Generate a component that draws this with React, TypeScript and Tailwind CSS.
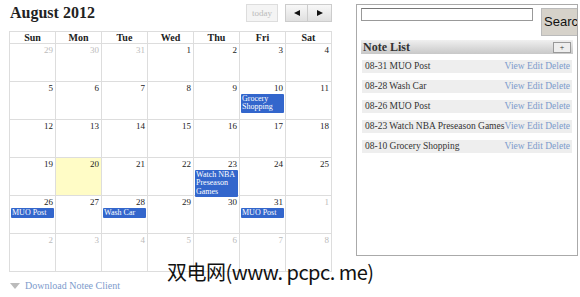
import React from 'react';

type Ev = { title: string };
type Day = { n: number; other?: boolean; today?: boolean; events?: Ev[] };

const weeks: Day[][] = [
  [{ n: 29, other: true }, { n: 30, other: true }, { n: 31, other: true }, { n: 1 }, { n: 2 }, { n: 3 }, { n: 4 }],
  [{ n: 5 }, { n: 6 }, { n: 7 }, { n: 8 }, { n: 9 }, { n: 10, events: [{ title: 'Grocery Shopping' }] }, { n: 11 }],
  [{ n: 12 }, { n: 13 }, { n: 14 }, { n: 15 }, { n: 16 }, { n: 17 }, { n: 18 }],
  [{ n: 19 }, { n: 20, today: true }, { n: 21 }, { n: 22 }, { n: 23, events: [{ title: 'Watch NBA Preseason Games' }] }, { n: 24 }, { n: 25 }],
  [{ n: 26, events: [{ title: 'MUO Post' }] }, { n: 27 }, { n: 28, events: [{ title: 'Wash Car' }] }, { n: 29 }, { n: 30 }, { n: 31, events: [{ title: 'MUO Post' }] }, { n: 1, other: true }],
  [{ n: 2, other: true }, { n: 3, other: true }, { n: 4, other: true }, { n: 5, other: true }, { n: 6, other: true }, { n: 7, other: true }, { n: 8, other: true }],
];

const notes = [
  '08-31 MUO Post',
  '08-28 Wash Car',
  '08-26 MUO Post',
  '08-23 Watch NBA Preseason Games',
  '08-10 Grocery Shopping',
];

const serif = "font-['Liberation_Serif',Georgia,serif]";

export default function App() {
  return (
    <div className={`relative w-[580px] h-[297px] bg-white overflow-hidden ${serif}`}>
      <div className="flex">
        {/* Calendar */}
        <div className="pl-[9px] w-[340px]">
          <div className="flex items-start h-[31px] pt-[4px]">
            <h1 className="pl-[1px] text-[16px] leading-[18px] font-bold text-[#222]">August 2012</h1>
            <div className="ml-auto flex gap-[7px] pr-[8px]">
              <button className="w-[32px] h-[18px] border border-[#ddd] bg-[#f4f4f4] text-[#bbb] text-[9px] leading-none">today</button>
              <div className="flex h-[18px] border border-[#ccc] bg-gradient-to-b from-[#f8f8f8] to-[#e0e0e0]">
                <button className="w-[22px] flex items-center justify-center border-r border-[#ccc]">
                  <svg width="6" height="6" viewBox="0 0 6 6"><path d="M0 3L6 0V6Z" fill="#111" /></svg>
                </button>
                <button className="w-[23px] flex items-center justify-center">
                  <svg width="6" height="6" viewBox="0 0 6 6"><path d="M6 3L0 0V6Z" fill="#111" /></svg>
                </button>
              </div>
            </div>
          </div>
          <div className="w-[323px] border-l border-t border-[#ddd]">
            <div className="grid grid-cols-7">
              {['Sun', 'Mon', 'Tue', 'Wed', 'Thu', 'Fri', 'Sat'].map((d) => (
                <div key={d} className="h-[12px] border-r border-b border-[#ddd] text-center text-[10px] leading-[11px] font-bold text-[#222]">
                  {d}
                </div>
              ))}
            </div>
            {weeks.map((w, i) => (
              <div key={i} className="grid grid-cols-7">
                {w.map((d, j) => (
                  <div
                    key={j}
                    className={`h-[38px] border-r border-b border-[#ddd] ${d.today ? 'bg-[#fffcc6]' : ''}`}
                  >
                    <div className={`text-right pr-[2px] pt-[1px] text-[9px] leading-[10px] ${d.other ? 'text-[#bbb]' : 'text-[#222]'}`}>
                      {d.n}
                    </div>
                    {d.events?.map((e) => (
                      <div key={e.title} className="mx-[1px] mt-[1px] bg-[#3366cc] text-white text-[8px] leading-[8.5px] px-[1px] pt-[0.5px] pb-[1px] rounded-[1px]">
                        {e.title}
                      </div>
                    ))}
                  </div>
                ))}
              </div>
            ))}
          </div>
          <div className="flex items-center gap-[5px] mt-[6px] pl-[1px]">
            <svg width="10" height="6" viewBox="0 0 10 6"><path d="M0 0H10L5 6Z" fill="#bbb" /></svg>
            <span className="text-[10px] text-[#7d9bcc]">Download Notee Client</span>
          </div>
        </div>

        {/* Notes panel */}
        <div className="ml-[16px] mt-[4px] w-[222px] h-[252px] border border-[#aaa] px-[4px] pt-[3px] overflow-hidden">
          <div className="flex items-start">
            <input className="shrink-0 w-[172px] h-[13px] border border-[#999] border-t-[#777] bg-white" />
            <button className="shrink-0 ml-[8px] w-[48px] h-[28px] bg-[#d6d2ca] border border-[#bbb] text-left pl-[2px] text-[13px] text-[#111] font-['Liberation_Sans',Arial,sans-serif]">
              Search
            </button>
          </div>
          <div className="mt-[4px] h-[14px] flex items-center bg-gradient-to-b from-[#f0f0f0] to-[#c8c8c8] pl-[2px] pr-[2px]">
            <span className="text-[12px] font-bold text-[#333] leading-none">Note List</span>
            <button className="ml-auto w-[18px] h-[11px] border border-[#999] bg-[#eee] text-[8px] leading-[9px] text-[#333]">+</button>
          </div>
          <div className="mt-[6px] flex flex-col gap-[7px] pl-[1px] pr-[1px]">
            {notes.map((n) => (
              <div key={n} className="h-[13px] bg-[#eee] flex items-center pl-[3px] pr-[2px] text-[9.5px]">
                <span className="text-[#333]">{n}</span>
                <span className="ml-auto text-[#7d9bcc]">View Edit Delete</span>
              </div>
            ))}
          </div>
        </div>
      </div>

      {/* watermark */}
      <div className="absolute left-[167px] top-[259px] text-[20px] leading-[26px] text-[#111] font-['Noto_Sans_CJK_SC',sans-serif] tracking-[-0.5px]">
        双电网(www. pcpc. me)
      </div>
    </div>
  );
}
